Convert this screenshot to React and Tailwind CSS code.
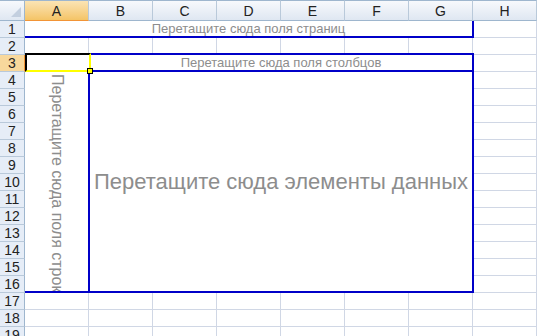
const cols = ['A', 'B', 'C', 'D', 'E', 'F', 'G', 'H']
const rows = Array.from({ length: 19 }, (_, i) => i + 1)

// cells hidden under the pivot drop zones (row, column index 0 = A)
function covered(r, c) {
  if (r === 1 && c <= 6) return true
  if (r >= 3 && r <= 16 && c <= 6) return true
  return false
}

const headBg = 'bg-gradient-to-b from-[#f7f9fc] to-[#dfe7f2]'
const selBg = 'bg-gradient-to-b from-[#fbe4b4] to-[#f4c466]'

export default function App() {
  return (
    <div
      className="w-[537px] h-[336px] overflow-hidden bg-white grid grid-cols-[25px_repeat(8,64px)] grid-rows-[21px_repeat(19,17px)]"
      style={{ fontFamily: '"Liberation Sans", Arial, sans-serif' }}
    >
      {/* corner */}
      <div className={`${headBg} border-t border-r border-b border-[#9eb6ce] flex items-end justify-end p-[3px]`}>
        <svg width="10" height="10" viewBox="0 0 10 10">
          <polygon points="10,0 10,10 0,10" fill="#c3cfdf" />
        </svg>
      </div>
      {cols.map((c) => (
        <div
          key={c}
          className={`${c === 'A' ? selBg + ' border-b-[#f29436]' : headBg + ' border-b-[#9eb6ce]'} border-t border-t-[#9eb6ce] border-r border-r-[#b9c9da] border-b flex items-center justify-center text-[14px] text-[#222] leading-none pt-[1px]`}
        >
          {c}
        </div>
      ))}

      {rows.map((r) => (
        <>
          <div
            key={'h' + r}
            className={`${r === 3 ? 'bg-[#f8d89c] border-r-[#f29436]' : 'bg-[#e6edf7] border-r-[#9eb6ce]'} border-r border-b border-b-[#b9c9da] flex items-center justify-center text-[14px] text-[#222] leading-none`}
          >
            {r}
          </div>
          {cols.map((c, ci) =>
            covered(r, ci) ? null : (
              <div key={r + c} className="border-r border-b border-[#d0d7e5]" />
            )
          )}
        </>
      ))}

      {/* page fields A1:G1 */}
      <div className="col-start-2 col-end-9 row-start-2 row-end-3 -mr-[1px] bg-white border-r-2 border-b-2 border-[#0000c8] flex items-center justify-center text-[13px] text-[#8d8d8d] leading-none">
        Перетащите сюда поля страниц
      </div>

      {/* column fields B3:G3 */}
      <div className="col-start-3 col-end-9 row-start-4 row-end-5 -mt-[2px] -mr-[1px] -ml-[1px] bg-white border-2 border-[#0000c8] flex items-center justify-center text-[13px] text-[#8d8d8d] leading-none">
        Перетащите сюда поля столбцов
      </div>

      {/* row fields A4:A16 */}
      <div className="col-start-2 col-end-3 row-start-5 row-end-18 bg-white border-b-2 border-[#0000c8] overflow-hidden flex justify-center pt-[2px]">
        <span className="[writing-mode:vertical-rl] whitespace-nowrap text-[16px] text-[#8d8d8d] leading-none">
          Перетащите сюда поля строк
        </span>
      </div>

      {/* data area B4:G16 */}
      <div className="col-start-3 col-end-9 row-start-5 row-end-18 -ml-[1px] -mr-[1px] bg-white border-l-2 border-r-2 border-b-2 border-[#0000c8] flex items-center justify-center text-[22px] text-[#8d8d8d] leading-none">
        Перетащите сюда элементы данных
      </div>

      {/* active cell A3 */}
      <div className="relative col-start-2 col-end-3 row-start-4 row-end-5 -mt-[2px] -mr-[2px] bg-white border-t-2 border-l-2 border-t-black border-l-black border-r-2 border-b-2 border-r-[#ffff00] border-b-[#ffff00]">
        <div className="absolute -right-[4px] -bottom-[4px] w-[6px] h-[6px] bg-[#ffff00] border border-black" />
      </div>
    </div>
  )
}
